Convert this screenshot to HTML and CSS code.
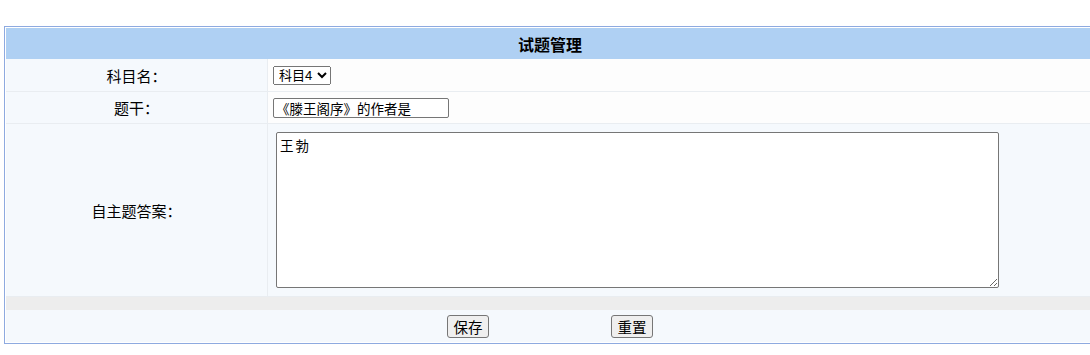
FILE: index.html
```html
<!DOCTYPE html>
<html lang="zh-CN">
<head>
    <meta charset="UTF-8">
    <title>试题管理</title>
    <link rel="stylesheet" href="styles.css">
</head>
<body>
    <form class="editForm">
        <table class="formTable">
            <tr>
                <th colspan="2" class="tableTitle">试题管理</th>
            </tr>
            <tr class="formRow">
                <td class="label firstLabel">科目名：</td>
                <td class="field">
                    <select class="subjectSelect">
                        <option>科目1</option>
                        <option>科目2</option>
                        <option>科目3</option>
                        <option selected>科目4</option>
                    </select>
                </td>
            </tr>
            <tr class="formRow">
                <td class="label">题干：</td>
                <td class="field">
                    <input type="text" class="stemInput" value="《滕王阁序》的作者是">
                </td>
            </tr>
            <tr class="formRow lightRow">
                <td class="label">自主题答案：</td>
                <td class="field areaCell">
                    <textarea class="answerArea">王勃</textarea>
                </td>
            </tr>
            <tr>
                <td colspan="2" class="spacer"></td>
            </tr>
            <tr>
                <td colspan="2" class="actions">
                    <div class="btnGroup">
                        <button type="button" class="formBtn">保存</button>
                        <button type="reset" class="formBtn">重置</button>
                    </div>
                </td>
            </tr>
        </table>
    </form>
</body>
</html>
```

FILE: styles.css
```css
body {
    margin: 0;
    padding: 26px 0 0 4px;
    overflow: hidden;
    background-color: #ffffff;
    font-family: "Noto Sans CJK SC", "Noto Sans", sans-serif;
    font-size: 14px;
    color: #000;
}

.formTable {
    width: 1092px;
    border: 1px solid #8eaae0;
    padding: 1px;
    border-spacing: 0;
    background-color: #ffffff;
}

.tableTitle {
    height: 31px;
    padding: 0;
    background-color: #afd0f3;
    font-size: 16px;
    font-weight: bold;
    text-align: center;
    vertical-align: middle;
}

.formRow td {
    border-bottom: 1px solid #e9edf1;
    padding: 0;
}

.label {
    width: 261px;
    height: 31px;
    text-align: center;
    font-size: 15px;
    background-color: #f5f9fd;
    border-right: 1px solid #e9edf1;
}

.firstLabel {
    height: 32px;
}

.field {
    padding-left: 5px !important;
    background-color: #fdfdfd;
}

.lightRow .field {
    background-color: #f5f9fd;
}

.subjectSelect {
    width: 58px;
    height: 19px;
    margin: 0;
    padding: 0 0 0 1px;
    box-sizing: border-box;
    font-family: "Liberation Sans", "Noto Sans CJK SC", sans-serif;
    font-size: 13px;
    display: block;
}

.stemInput {
    width: 176px;
    height: 20px;
    margin: 0;
    padding: 0 2px;
    box-sizing: border-box;
    border: 1px solid #767676;
    border-radius: 2px;
    font-family: inherit;
    font-size: 13.5px;
    display: block;
}

.areaCell {
    height: 172px;
}

.answerArea {
    display: block;
    width: 723px;
    height: 156px;
    margin: 0 0 0 3px;
    padding: 3px 3px;
    box-sizing: border-box;
    border: 1px solid #767676;
    border-radius: 2px;
    font-family: inherit;
    font-size: 13.5px;
    letter-spacing: 2px;
    line-height: 18px;
    resize: both;
}

.spacer {
    height: 13px;
    padding: 0;
    background-color: #ededed;
}

.actions {
    height: 32px;
    padding: 0;
    background-color: #f5f9fd;
}

.btnGroup {
    display: flex;
    justify-content: center;
    gap: 122px;
    padding-top: 1px;
}

.formBtn {
    width: 42px;
    height: 23px;
    padding: 0;
    font-family: inherit;
    font-size: 14.5px;
    background-color: #efefef;
    border: 1px solid #767676;
    border-radius: 3px;
}
```
